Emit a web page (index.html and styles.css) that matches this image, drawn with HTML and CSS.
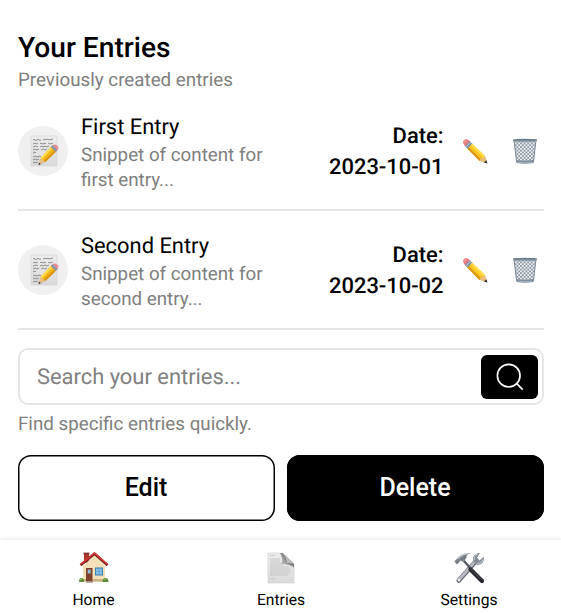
FILE: index.html
```html
<!DOCTYPE html>
<html lang="en">
<head>
<meta charset="utf-8">
<meta name="viewport" content="width=device-width, initial-scale=1">
<title>Your Entries</title>
<link rel="stylesheet" href="styles.css">
</head>
<body>
<svg class="sprite" aria-hidden="true">
  <defs>
    <linearGradient id="paper" x1="0" y1="0" x2="0" y2="1"><stop offset="0" stop-color="#ededed"/><stop offset="1" stop-color="#dadada"/></linearGradient>
    <linearGradient id="fold" x1="0" y1="1" x2="1" y2="0"><stop offset="0" stop-color="#ddd"/><stop offset=".45" stop-color="#999"/><stop offset="1" stop-color="#555"/></linearGradient>
    <linearGradient id="steel" x1="0" y1="0" x2="1" y2="1"><stop offset="0" stop-color="#c5ccd4"/><stop offset=".5" stop-color="#6f7780"/><stop offset="1" stop-color="#b9b9bd"/></linearGradient>
    <pattern id="mesh" width="3.6" height="3.6" patternUnits="userSpaceOnUse"><path d="M0 0l3.6 3.6M3.6 0L0 3.6" stroke="#7c8690" stroke-width=".75"/></pattern>
    <symbol id="pencil" viewBox="0 0 26 26">
      <path d="M1 4.5Q1 1 5 1l4 3-5 5-2-2z" fill="#ef8f91"/>
      <path d="M5.8 2L9 4.5 4.5 9 1.8 6z" fill="#e97b80"/>
      <path d="M7.7 3.4l3 2.5-5 5-2.8-3z" fill="#8296a6"/>
      <path d="M8.6 4.2L4 9" stroke="#d0dce3" stroke-width=".7"/>
      <path d="M10.2 5.7L23 18l-5.5 5L5.5 10.8z" fill="#f8c51c"/>
      <path d="M10.2 5.7L23 18l-1.6 1.4L8.7 7.2z" fill="#ffdc4e"/>
      <path d="M7 9.5l12.2 12-1.7 1.5L5.5 10.8z" fill="#d99411"/>
      <path d="M23 18l2.3 7.3-7.8-2.3 1.2-3 2.3-.2z" fill="#e8bb79"/>
      <path d="M24.4 22.2l1 3.2-3.4-1z" fill="#292522"/>
    </symbol>
    <symbol id="memo" viewBox="0 0 30 32">
      <path d="M1 1h26v30H1z" fill="url(#paper)" stroke="#d4d4d4" stroke-width=".6"/>
      <g fill="none" stroke="#666" stroke-width=".7">
        <path d="M3 5q1-1.3 2 0t2 0 2-.2 2 .1M13 5l2-1 1 1 2-1 1 1 4-1"/>
        <path d="M3 9l2-1 1 1 2-1M10 9l1-1 2 1 2-1 1 1M18 8l2 1 3-1"/>
        <path d="M3 12l3-1 2 1M10 12l2-1 1 1 2-1 2 1 2-1"/>
        <path d="M3 15l2-1 2 1 2-1M11 15l2-1 2 1 2-1"/>
        <path d="M3 18l2-1 1 1M3 22l2-1 2 1 3-1 1 1M3 25l2-1 2 1 2-1M3 28l2-1 1 1 2-1"/>
      </g>
      <path d="M10 24L23 10l5 5-13 12-6 4z" fill="#888" opacity=".28"/>
      <path d="M22 11q3-3 6 .4 1 2-.5 3.5l-2 2-5-4z" fill="#e98b93"/>
      <path d="M20.8 12.1l1.8-1.8 4.8 4.8-1.8 1.8z" fill="#8797a3"/>
      <path d="M20.6 12.3l5 4.6-10.2 10-5-3.6z" fill="#f4b719"/>
      <path d="M20.6 12.3l1.6 1.5-10.3 10.4-1.5-.9z" fill="#ffdc50"/>
      <path d="M25.6 16.9L15.4 26.9l-1.6-1.2 10.4-10.2z" fill="#dc920f"/>
      <path d="M10.4 23.3l2 1 .8 1.4 2.2 1.2L8.5 30z" fill="#e8bd82"/>
      <path d="M9.1 27.8L8.4 30l2.3-.9z" fill="#222"/>
    </symbol>
    <symbol id="trash" viewBox="0 0 26 26">
      <path d="M2 2h22l-2.7 23H4.7z" fill="#eef1f3"/>
      <path d="M2 2h22l-2.7 23H4.7z" fill="url(#mesh)"/>
      <path d="M2 2l2.6 22M24 2l-2.6 22" stroke="#798895" stroke-width="1" fill="none"/>
      <path d="M4.3 22q8.7 1.6 17.4 0l-.5 3q-8.2 1.5-16.4 0z" fill="#7c8d9c"/>
      <path d="M6 24.2q7 1 14 0" stroke="#b3c0cb" stroke-width=".7" fill="none"/>
      <path d="M1 1.3q12-1.2 24 0v1.9q-12 1-24 0z" fill="#8495a4"/>
      <path d="M2.5 2q10.5-.7 21 0" stroke="#53616d" stroke-width=".7" fill="none"/>
    </symbol>
    <symbol id="home" viewBox="0 0 30 32">
      <path d="M5 1h5v10H5z" fill="#ab3528"/><path d="M4.5.6h6v1.8h-6z" fill="#83362b"/>
      <path d="M4 14L15.5 3 26 14v15.5H4z" fill="#f3dfb8"/>
      <path d="M4 27h22v2.6H4z" fill="#c9b188"/>
      <path d="M1.5 13.2L15.5 1.8 28.5 13.2" fill="none" stroke="#7a211d" stroke-width="2.6"/>
      <path d="M1.5 12.4L15.5 1 28.5 12.4" fill="none" stroke="#d83e35" stroke-width="1.4"/>
      <path d="M7 16h6.5v14H7z" fill="#804029"/><path d="M8.7 17.5h3v4h-3z" fill="#91b9d0"/>
      <path d="M7 29h7v1.7H7z" fill="#a1978a"/>
      <path d="M16 15.5h8v8h-8z" fill="#397fae"/><path d="M17 16.5h6v6h-6z" fill="#85c0e6"/><path d="M20 16v7M16.5 19.5h7" stroke="#5999c4" stroke-width=".6"/>
      <path d="M0 30q0-4 2.5-4T5 30zM23.5 30q0-4 3-4t3 4z" fill="#5c8c35"/>
      <path d="M1 28l2-1M25 28l2-1" stroke="#94b961" stroke-width="1"/>
    </symbol>
    <symbol id="page" viewBox="0 0 28 32">
      <path d="M1 1h14.5L27 12v19H1z" fill="url(#paper)" stroke="#ccc" stroke-width=".6"/>
      <path d="M3 3.5h5M3 7h10M3 9h10M3 11h12M3 13h13M3 15h19M3 17h20M3 19h21M3 21h20M3 23h18M3 27h5" stroke="#b9b9b9" stroke-width=".7"/>
      <path d="M15.5 1L27 16q-4-4-13-4Q17 8 13 1z" fill="url(#fold)"/>
      <path d="M15.5 1L27 12v3.5q-2-4-8-4Q19 5 15.5 1z" fill="#707070"/>
      <path d="M15.5 1L27 12q-3.5-1-7.5-.5Q19.5 4 15.5 1z" fill="#b9b9b9"/>
    </symbol>
    <symbol id="tools" viewBox="0 0 32 32">
      <path d="M5.8 28.5L23 9" stroke="#646872" stroke-width="4.6" stroke-linecap="round"/>
      <path d="M5.8 28L22.5 9" stroke="#b7bac1" stroke-width="2.8" stroke-linecap="round"/>
      <path d="M21 10Q17.5 4 25 1l2 .2-3 4.3 2.5 3 4.4-3.8Q32 12 24.5 13z" fill="#858d96"/>
      <path d="M21.4 8Q20 4 25 1.7M24.5 11.5q4.5 0 5.5-4" stroke="#cbd1d6" fill="none"/>
      <circle cx="6" cy="28" r="1.2" fill="#f5f5f5"/>
      <path d="M10 8L29 29" stroke="#545b63" stroke-width="2.4"/>
      <path d="M17.5 17.5L29 29" stroke="#25282c" stroke-width="4.2" stroke-linecap="round"/>
      <path d="M17.5 16.8L28.2 27.5" stroke="#62676d" stroke-width=".7"/>
      <path d="M1.2 9.3L4 6.8q3-6.3 13.8-5.5-5 1.1-4.5 4.6l-2.8 4.2-3-1.7-3.4 4z" fill="url(#steel)"/>
      <path d="M5 6.5Q9 1.8 15 1.8" stroke="#dce3e9" stroke-width="1.1" fill="none"/>
    </symbol>
  </defs>
</svg>
<main class="content">
  <header>
    <h1 class="title">Your Entries</h1>
    <p class="subtitle">Previously created entries</p>
  </header>
  <ul class="entries">
    <li class="entry">
      <div class="avatar"><svg class="memo"><use href="#memo"/></svg></div>
      <div class="info"><h2 class="name">First Entry</h2><p class="snippet">Snippet of content for<br>first entry...</p></div>
      <div class="date">Date:<br>2023-10-01</div>
      <svg class="action"><use href="#pencil"/></svg>
      <svg class="action trash"><use href="#trash"/></svg>
    </li>
    <li class="entry">
      <div class="avatar"><svg class="memo"><use href="#memo"/></svg></div>
      <div class="info"><h2 class="name">Second Entry</h2><p class="snippet">Snippet of content for<br>second entry...</p></div>
      <div class="date">Date:<br>2023-10-02</div>
      <svg class="action"><use href="#pencil"/></svg>
      <svg class="action trash"><use href="#trash"/></svg>
    </li>
  </ul>
  <div class="search">
    <span class="placeholder">Search your entries...</span>
    <button class="search-button" aria-label="Search"><svg class="lens" viewBox="0 0 28 28"><circle cx="12.7" cy="12.7" r="11.3"/><path d="M20.7 20.7l6 6"/></svg></button>
  </div>
  <p class="hint">Find specific entries quickly.</p>
  <div class="buttons"><button class="button">Edit</button><button class="button filled">Delete</button></div>
</main>
<nav class="tabs">
  <a class="tab"><svg class="tab-icon"><use href="#home"/></svg><span>Home</span></a>
  <a class="tab"><svg class="tab-icon"><use href="#page"/></svg><span>Entries</span></a>
  <a class="tab"><svg class="tab-icon"><use href="#tools"/></svg><span>Settings</span></a>
</nav>
</body>
</html>
```
FILE: styles.css
```css
* { box-sizing: border-box; }
body {
  margin: 0;
  height: 613px;
  overflow: hidden;
  display: flex;
  flex-direction: column;
  background: #fff;
  color: #000;
  font-family: Roboto, sans-serif;
  text-rendering: geometricPrecision;
}
h1, h2, p, ul { margin: 0; padding: 0; }
button { font: inherit; padding: 0; }
.sprite { position: absolute; width: 0; height: 0; }
.content { height: 540px; padding: 30px 17px 0 18px; }
.title { font-size: 28.15px; font-weight: 500; line-height: 35px; }
.subtitle { font-size: 18.77px; line-height: 25px; color: #808080; padding-top: 3px; margin-bottom: -1px; }
.entries { list-style: none; }
.entry {
  display: flex;
  align-items: center;
  height: 119px;
  border-bottom: 2px solid #e6e6e6;
}
.avatar {
  width: 50px;
  height: 50px;
  border-radius: 50%;
  background: #f0f0f0;
  display: flex;
  align-items: center;
  justify-content: center;
  margin-right: 13px;
}
.memo { width: 30px; height: 32px; margin: 1px 0 0 3px; }
.info { flex: 1; padding-top: 3px; }
.name { font-size: 21.9px; font-weight: 400; line-height: 31px; }
.snippet { font-size: 18.77px; line-height: 25px; color: #808080; }
.date { font-size: 21.9px; font-weight: 500; line-height: 31px; text-align: right; padding-top: 3px; }
.action { width: 26px; height: 26px; margin-left: 18.5px; }
.trash { margin: 0 6px 0 24px; }
.search {
  display: flex;
  align-items: center;
  justify-content: space-between;
  height: 57px;
  margin-top: 18px;
  padding: 0 4px 0 17px;
  border: 2px solid #e6e6e6;
  border-radius: 10px;
}
.placeholder { font-size: 21.9px; color: #808080; padding-top: 2px; }
.search-button {
  width: 57px;
  height: 44px;
  border: 0;
  border-radius: 6px;
  background: #000;
  display: flex;
  align-items: center;
  justify-content: center;
}
.lens { width: 28px; height: 28px; fill: none; stroke: #fff; stroke-width: 1.7; }
.hint { font-size: 18.77px; line-height: 25px; margin-top: 7px; color: #808080; }
.buttons { display: grid; grid-template-columns: 1fr 1fr; gap: 12px; margin-top: 18px; }
.button {
  height: 66px;
  border: 0;
  box-shadow: inset 0 0 0 1.5px #000;
  border-radius: 13px;
  background: #fff;
  color: #000;
  font-size: 25px;
  font-weight: 500;
  padding: 0 1px 2px 0;
}
.filled { background: #000; color: #fff; }
.tabs {
  height: 73px;
  display: grid;
  grid-template-columns: 187px 188px 188px;
  background: #fff;
  box-shadow: 0 -1px 4px rgba(0, 0, 0, .1);
}
.tab { display: flex; flex-direction: column; align-items: center; padding-top: 12px; font-size: 15.65px; line-height: 20px; }
.tab-icon { width: 32px; height: 32px; margin-bottom: 6px; }
```
